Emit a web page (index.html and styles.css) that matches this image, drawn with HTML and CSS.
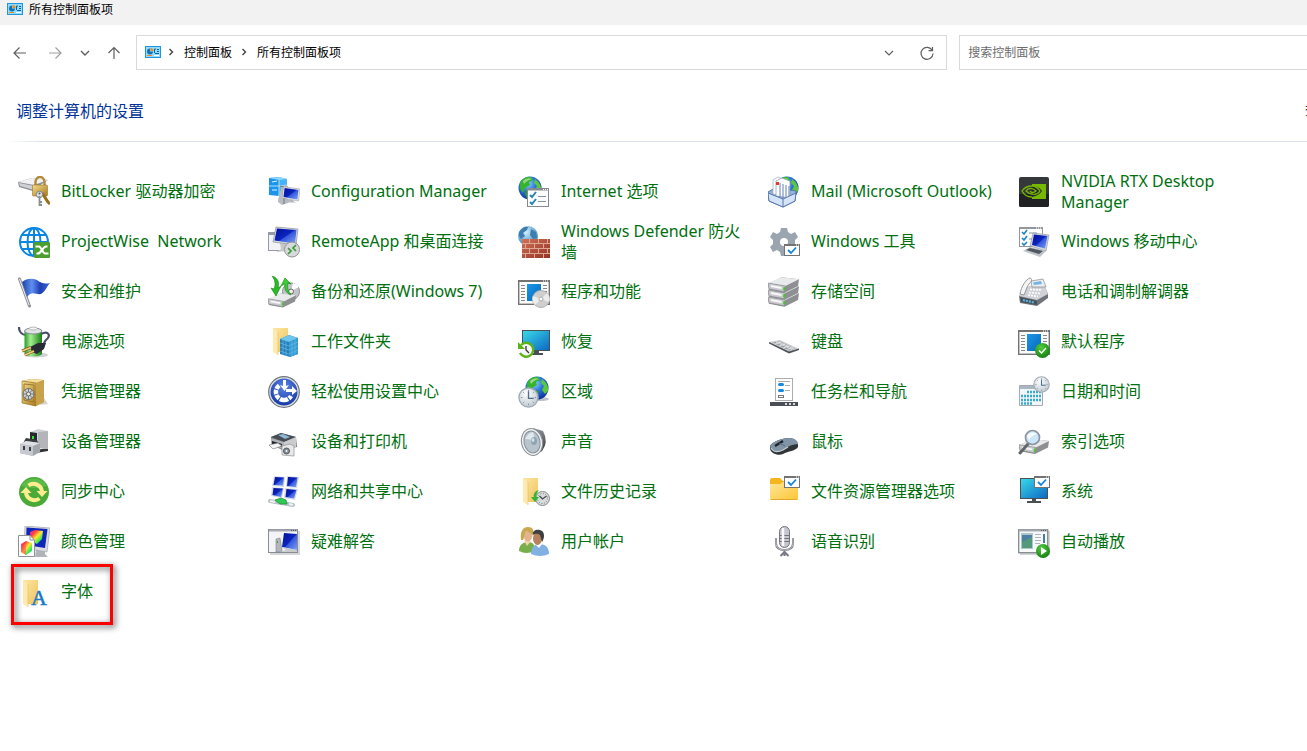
FILE: index.html
```html
<!DOCTYPE html>
<html lang="zh-CN">
<head>
  <meta charset="UTF-8">
  <title>所有控制面板项</title>
  <meta name="viewport" content="width=device-width, initial-scale=1.0">
  <link rel="stylesheet" href="styles.css">
</head>
<body>
  <!-- shared gradients and icon parts -->
  <svg class="defs" width="0" height="0" aria-hidden="true">
    <defs>
      <linearGradient id="gold" x1="0" y1="0" x2="1" y2="1"><stop offset="0" stop-color="#f3dc8c"/><stop offset="1" stop-color="#a97a1c"/></linearGradient>
      <linearGradient id="dark" x1="0" y1="0" x2="0" y2="1"><stop offset="0" stop-color="#8b9299"/><stop offset="1" stop-color="#26292c"/></linearGradient>
      <linearGradient id="blue" x1="0" y1="0" x2="1" y2="1"><stop offset="0" stop-color="#00109c"/><stop offset=".5" stop-color="#0d25bd"/><stop offset=".54" stop-color="#3557dc"/><stop offset="1" stop-color="#7ea2f6"/></linearGradient>
      <linearGradient id="cyan" x1="0" y1="0" x2="1" y2="1"><stop offset="0" stop-color="#3adbe8"/><stop offset="1" stop-color="#0b66c3"/></linearGradient>
      <linearGradient id="sky" x1="0" y1="0" x2="1" y2="1"><stop offset="0" stop-color="#1b97ea"/><stop offset="1" stop-color="#0867b8"/></linearGradient>
      <linearGradient id="yellow" x1="0" y1="0" x2="1" y2="1"><stop offset="0" stop-color="#ffe7a2"/><stop offset="1" stop-color="#ecc45c"/></linearGradient>
      <linearGradient id="amber" x1="0" y1="0" x2="1" y2="1"><stop offset="0" stop-color="#ffe59a"/><stop offset="1" stop-color="#fdc734"/></linearGradient>
      <linearGradient id="flag" x1="0" y1="0" x2="1" y2="0"><stop offset="0" stop-color="#1c3fa8"/><stop offset=".35" stop-color="#5f8ff0"/><stop offset=".65" stop-color="#1f3fb5"/><stop offset="1" stop-color="#3e66d8"/></linearGradient>
      <linearGradient id="battery" x1="0" y1="0" x2="1" y2="0"><stop offset="0" stop-color="#2a9a2a"/><stop offset=".35" stop-color="#a5ee90"/><stop offset="1" stop-color="#168016"/></linearGradient>
      <linearGradient id="rainbow" x1="0" y1="0" x2="1" y2="1"><stop offset="0" stop-color="#f22ad8"/><stop offset=".25" stop-color="#ff3b3b"/><stop offset=".5" stop-color="#ffe92e"/><stop offset=".75" stop-color="#2ee85a"/><stop offset="1" stop-color="#1ec8ff"/></linearGradient>
      <linearGradient id="brick" x1="0" y1="0" x2="1" y2="1"><stop offset="0" stop-color="#d27058"/><stop offset="1" stop-color="#933322"/></linearGradient>
      <radialGradient id="ocean" cx=".4" cy=".3" r=".75"><stop offset="0" stop-color="#8fd6ff"/><stop offset=".45" stop-color="#2d78dc"/><stop offset="1" stop-color="#0a2a96"/></radialGradient>
      <radialGradient id="pale" cx=".4" cy=".3" r=".75"><stop offset="0" stop-color="#d3efff"/><stop offset="1" stop-color="#3180b8"/></radialGradient>
      <radialGradient id="green" cx=".4" cy=".3" r=".75"><stop offset="0" stop-color="#52cc3c"/><stop offset="1" stop-color="#137d12"/></radialGradient>
      <radialGradient id="ease" cx=".5" cy=".3" r=".7"><stop offset="0" stop-color="#5c85e6"/><stop offset="1" stop-color="#173aa6"/></radialGradient>
      <radialGradient id="face" cx=".4" cy=".3" r=".8"><stop offset="0" stop-color="#ffffff"/><stop offset="1" stop-color="#b7c3cd"/></radialGradient>
    </defs>

    <symbol id="globe" viewBox="0 0 24 24">
      <circle cx="12" cy="12" r="11.5" fill="url(#ocean)"/>
      <path d="M3 5Q8 0 13 1L15 4L11 6L12 9L7 12L5 17Q0 12 3 5Z" fill="#38b32c"/>
      <path d="M8 14L14 15L12 21L9 23L7 18Z" fill="#2a9c35"/>
      <path d="M17 3Q24 8 23 15L20 18L17 14L19 10L16 7Z" fill="#5bc83b"/>
      <path d="M5 5Q9 1 14 3Q9 4 6 8Z" fill="#d4f4c0" opacity=".6"/>
    </symbol>

    <symbol id="folder" viewBox="0 0 18 28">
      <path d="M1 1H16V25L6 25Z" fill="url(#yellow)"/>
      <path d="M1 1L6 5V28L1 25Z" fill="#ffe9ae"/>
      <path d="M6 5V28" stroke="#e2be60" stroke-width=".6"/>
    </symbol>

    <symbol id="screen" viewBox="0 0 24 22">
      <path d="M8 17L15 18L16 20L20 21H7L4 19L8 18Z" fill="#b5b8bc"/>
      <path d="M2 0L24 3L22 19L0 15Z" fill="#e5e7ea" stroke="#8e9298" stroke-width=".7"/>
      <path d="M3.500 1.700L22 4.300L20.500 17L2 13.600Z" fill="url(#blue)"/>
    </symbol>

    <symbol id="drive" viewBox="0 0 32 16">
      <path d="M0 7L14 0L32 2L31 9L17 16L1 13Z" fill="#8d8f92"/>
      <path d="M0 6L14 0L32 2L18 9Z" fill="#e9eaec"/>
      <path d="M0 6L18 9L17 15L1 12Z" fill="#c9cacf" stroke="#77797d" stroke-width=".5"/>
      <path d="M3 8L14 10V12L3 10Z" fill="#f8f8fa"/>
      <path d="M16 10L18 10L17.500 14L15.500 13.500Z" fill="#4cc42f"/>
    </symbol>

    <symbol id="checkwin" viewBox="0 0 16 12">
      <rect x=".5" y=".5" width="15" height="11" fill="#fff" stroke="#737373"/>
      <path d="M0 1H16" stroke="#737373" stroke-width="2"/>
      <path d="M12 1H13M14 1H15" stroke="#fff"/>
      <path d="M4 6L7 9L12 3.500" fill="none" stroke="#1384de" stroke-width="1.800"/>
    </symbol>

    <symbol id="appwin" viewBox="0 0 32 26">
      <rect x=".7" y=".7" width="30.600" height="23.600" fill="#fafafa" stroke="#737373" stroke-width="1.400"/>
      <path d="M0 1H32" stroke="#737373" stroke-width="2"/>
      <path d="M25 1H26M27 1H28M29 1H30" stroke="#fff"/>
      <path d="M3 5.500H7M3 8.500H7M3 11.500H7M3 14.500H7M3 17.500H7M3 20.500H7M25 5.500H29M25 8.500H29M25 11.500H29M25 14.500H29" stroke="#858585"/>
      <rect x="9" y="4" width="14" height="17" fill="url(#sky)"/>
    </symbol>

    <symbol id="clock" viewBox="0 0 22 22">
      <circle cx="11" cy="11" r="10" fill="url(#face)" stroke="#a3adb5" stroke-width="1.500"/>
      <path d="M11 3V4.500M11 17.500V19M3 11H4.500M17.500 11H19M5.500 5.500L6.500 6.500M15.500 15.500L16.500 16.500M5.500 16.500L6.500 15.500M15.500 6.500L16.500 5.500" stroke="#7f8d99"/>
      <path d="M11 4.500V12H16.500" fill="none" stroke="#4d6f88" stroke-width="1.400"/>
    </symbol>

    <symbol id="panel" viewBox="0 0 16 12">
      <rect width="16" height="12" fill="#2196dc"/>
      <rect x="1" y="1" width="14" height="10" fill="#8edcff"/>
      <path d="M5 2.500A3 3 0 1 0 8 5.500H5Z" fill="#1672b8"/>
      <path d="M5.500 2A3 3 0 0 1 8.500 5H5.500Z" fill="#f08a1c"/>
      <path d="M9.500 7V3H11M12 3.500H14M12 5.500H14M10 7.500H14" fill="none" stroke="#14609f"/>
      <path d="M2 9.500H7" stroke="#f08a1c"/><path d="M9 9.500H14" stroke="#fff"/>
    </symbol>
  </svg>

  <header class="titlebar">
    <svg class="panel-icon" aria-hidden="true"><use href="#panel"/></svg>
    <span>所有控制面板项</span>
  </header>

  <nav class="toolbar">
    <div class="history">
      <button type="button" aria-label="后退"><svg viewBox="0 0 16 16"><path d="M14 8H2.500M7.500 2.500L2 8L7.500 13.500"/></svg></button>
      <button type="button" aria-label="前进" disabled><svg viewBox="0 0 16 16"><path d="M2 8H13.500M8.500 2.500L14 8L8.500 13.500"/></svg></button>
      <button type="button" class="recent" aria-label="最近浏览的位置"><svg viewBox="0 0 16 16"><path d="M4 6L8 10L12 6"/></svg></button>
      <button type="button" aria-label="向上"><svg viewBox="0 0 16 16"><path d="M8 14V2.500M2.500 8L8 2.500L13.500 8"/></svg></button>
    </div>
    <div class="address">
      <svg class="panel-icon" aria-hidden="true"><use href="#panel"/></svg>
      <svg class="sep" viewBox="0 0 8 8"><path d="M2.500 1L5.500 4L2.500 7"/></svg>
      <a href="#">控制面板</a>
      <svg class="sep" viewBox="0 0 8 8"><path d="M2.500 1L5.500 4L2.500 7"/></svg>
      <a href="#">所有控制面板项</a>
      <div class="address-tools">
        <button type="button" aria-label="历史记录"><svg viewBox="0 0 16 16"><path d="M4 6L8 10L12 6"/></svg></button>
        <button type="button" aria-label="刷新"><svg viewBox="0 0 16 16"><path d="M13.300 5.500A6 6 0 1 0 14 8.500M13.500 2V5.700H9.500"/></svg></button>
      </div>
    </div>
    <input class="search" type="search" aria-label="搜索控制面板" placeholder="搜索控制面板">
  </nav>

  <main>
    <div class="heading">
      <h1>调整计算机的设置</h1>
      <span class="view-by">查看方式:</span>
    </div>

    <ul class="items">
      <li><a href="#">
        <svg viewBox="0 0 32 32"><path d="M0 6L14 2L30 4L18 12V16L1 11Z" fill="#8e9095"/><path d="M0 6L14 2L30 4L16 9Z" fill="#f1f1f3"/><path d="M1 7L16 10V14L2 10Z" fill="#cfd0d6"/><path d="M17.500 10V6A4.500 5 0 0 1 26.500 6V10" fill="none" stroke="#b08a3a" stroke-width="2.400"/><rect x="14.500" y="9" width="15" height="11" rx="1" fill="url(#gold)" stroke="#9a7427" stroke-width=".6"/><path d="M24 17L30 26L32 28" stroke="#9a6d18" stroke-width="3"/><circle cx="21.500" cy="18.500" r="3.200" fill="#dfe1e4" stroke="#7f8388"/><path d="M21.500 20V30M21.500 26H24M21.500 29H24" stroke="#8a8d92" stroke-width="1.800"/><circle cx="21.500" cy="17.500" r="1" fill="#555"/></svg>
        <span>BitLocker 驱动器加密</span></a></li>
      <li><a href="#">
        <svg viewBox="0 0 32 32"><path d="M1 2L11 1V20L1 19Z" fill="#1c94ea"/><path d="M11 1L19 3V19L11 20Z" fill="#45b3f5"/><path d="M1 2L11 1L19 3L11 4Z" fill="#8fd7ff"/><path d="M1 10H11L19 9M11 4V20" stroke="#a8e2ff" fill="none"/><path d="M4 6L9 5M4 14H9" stroke="#e0f5ff"/><path d="M14 9L20 10V27L14 29L10 26V24Z" fill="#b9bdc3"/><path d="M12 10L16 11V28" fill="none" stroke="#72767b"/><use href="#screen" x="14" y="9" width="18" height="20"/></svg>
        <span>Configuration Manager</span></a></li>
      <li><a href="#">
        <svg viewBox="0 0 32 32"><use href="#globe" x="0" y="0" width="24" height="24"/><rect x="9.500" y="12.500" width="21" height="18" fill="#fff" stroke="#85898f"/><path d="M9 13.500H31" stroke="#85898f" stroke-width="2"/><path d="M25 13.500H26M27 13.500H28M29 13.500H30" stroke="#fff"/><path d="M12 19L14 21L18 16M12 26L14 28L18 23" fill="none" stroke="#2386b5" stroke-width="2"/><path d="M20 20.500H28M20 25.500H28" stroke="#8094ad"/></svg>
        <span>Internet 选项</span></a></li>
      <li><a href="#">
        <svg viewBox="0 0 32 32"><use href="#globe" x="7" y="0" width="24" height="24"/><path d="M0 16L7 12L28 15L27 25L15 31L1 25Z" fill="#95b4de" stroke="#5877ab"/><path d="M5 4L10 1L15 3V20L5 18Z" fill="#fff" stroke="#9aaabd" stroke-width=".7"/><path d="M8 5L14 2L22 5V22L8 20Z" fill="#fff" stroke="#8092aa" stroke-width=".7"/><path d="M12 7V21M15 8V22M18 9V23M21 10V23" stroke="#6381b6"/><path d="M8 6H11V9H8Z" fill="#e2382a"/><path d="M0 17L15 23L28 17L27 25L15 31L1 25Z" fill="#d5e4f8" stroke="#5877ab"/><path d="M15 23V31" stroke="#5877ab"/></svg>
        <span>Mail (Microsoft Outlook)</span></a></li>
      <li><a href="#">
        <svg viewBox="0 0 32 32"><rect x="1" y="1" width="30" height="30" rx="2" fill="#34383b"/><path d="M1 18H31V29A2 2 0 0 1 29 31H3A2 2 0 0 1 1 29Z" fill="#1f2123"/><path d="M14 8H28V23H14Z" fill="#76b900"/><path d="M14 10C19 10 22 12 24 15C22 18 19 20 14 21Z" fill="#26292c"/><path d="M14 10C9 10 6 12 4 15C6 19 10 21 14 21M14 10C18 10 20 12 22 15C20 18 17 19 14 18C11 18 9 16 8 15C10 12 14 11 18 15C16 17 13 17 12 15" fill="none" stroke="#76b900" stroke-width="1.300"/></svg>
        <span>NVIDIA RTX Desktop Manager</span></a></li>

      <li><a href="#">
        <svg viewBox="0 0 32 32"><g fill="none" stroke="#0b86e2" stroke-width="2"><circle cx="16" cy="16" r="14"/><ellipse cx="16" cy="16" rx="6.500" ry="14"/><path d="M16 2V30M4 9H28M2 16H30M4 23H28"/></g><rect x="16" y="16" width="16" height="16" rx="1" fill="#4d9e31"/><path d="M17.500 20.500H21C23 20.500 25 27.500 27 27.500H30.500M18.500 27.500H20C23 27.500 25 20.500 28 20.500H29.500" fill="none" stroke="#fff" stroke-width="2.200"/></svg>
        <span>ProjectWise&nbsp; Network</span></a></li>
      <li><a href="#">
        <svg viewBox="0 0 32 32"><rect x=".5" y="6.500" width="15" height="18" fill="#f2f3f6" stroke="#9699a6"/><path d="M0 8H14" stroke="#9699a6" stroke-width="2"/><path d="M12 17L22 19L20 25L8 26L13 23Z" fill="#c6c8ca"/><path d="M8 1L30 3L28 19L5 16Z" fill="#d5d8dc" stroke="#8d9196" stroke-width=".7"/><path d="M9 2.500L28.500 4L27 17.500L6.500 14.500Z" fill="url(#blue)"/><circle cx="24" cy="23.500" r="7.500" fill="#d7d9db" stroke="#909396"/><path d="M20 22L23 25L20 28M28 19L25 22L28 25" fill="none" stroke="#3a9a38" stroke-width="1.700"/></svg>
        <span>RemoteApp 和桌面连接</span></a></li>
      <li><a href="#">
        <svg viewBox="0 0 32 32"><circle cx="10" cy="10" r="10" fill="url(#pale)"/><path d="M1 6Q5 0 10 1L9 4L5 7L7 10L3 13Q0 10 1 6ZM13 3L18 6L19 12L15 13L12 9Z" fill="#3b7fae"/><rect x="4" y="13" width="28" height="19" fill="#dca795"/><path d="M4 13H11V17H4ZM12 13H20V17H12ZM21 13H29V17H21ZM30 13H32V17H30ZM4 18H7V22H4ZM8 18H16V22H8ZM17 18H25V22H17ZM26 18H32V22H26ZM4 23H11V27H4ZM12 23H20V27H12ZM21 23H29V27H21ZM30 23H32V27H30ZM4 28H7V32H4ZM8 28H16V32H8ZM17 28H25V32H17ZM26 28H32V32H26Z" fill="url(#brick)"/></svg>
        <span>Windows Defender 防火墙</span></a></li>
      <li><a href="#">
        <svg viewBox="0 0 32 32"><path d="M13 2H19L20 6L23 8L27 6L30 11L27 14V18L30 21L27 26L23 25L20 27L19 30H13L12 26L9 24L5 26L2 21L5 18V14L2 11L5 6L9 8L12 6ZM16 12A4 4 0 1 0 16 20A4 4 0 0 0 16 12Z" fill="#9aa5af" fill-rule="evenodd"/><use href="#checkwin" x="16" y="18" width="16" height="12"/></svg>
        <span>Windows 工具</span></a></li>
      <li><a href="#">
        <svg viewBox="0 0 32 32"><rect x="1.500" y="1.500" width="23" height="19" fill="#fff" stroke="#92979f"/><path d="M1 2H25" stroke="#92979f" stroke-width="2"/><path d="M18 2H19M20 2H21M22 2H23" stroke="#fff"/><path d="M4 6L6 8L9 4M4 12L6 14L9 10M4 17L6 19L9 16" fill="none" stroke="#1d86c4" stroke-width="1.600"/><path d="M11 7H19M11 13H15" stroke="#8094ad"/><path d="M15 7L31 9L28 25L12 20Z" fill="#d2d7df" stroke="#858b95" stroke-width=".6"/><path d="M16 8.500L29.500 10L27 22.500L14 19Z" fill="url(#blue)"/><path d="M12 21L28 25L22 31L5 25Z" fill="#bfc4ca"/><path d="M12 22L25 25L21 28L8 24Z" fill="#50565e"/></svg>
        <span>Windows 移动中心</span></a></li>

      <li><a href="#">
        <svg viewBox="0 0 32 32"><path d="M1.500 3L11.500 30" stroke="#8f9297" stroke-width="3" stroke-linecap="round"/><path d="M1.500 3L11 29" stroke="#eceef0"/><path d="M4 6C9 2 14 2 19 4C24 8 28 8 32 7C29 10 28 15 23 18C18 19 14 14 9 21Z" fill="url(#flag)"/></svg>
        <span>安全和维护</span></a></li>
      <li><a href="#">
        <svg viewBox="0 0 32 32"><circle cx="23" cy="15.500" r="8.500" fill="#c4c5c9" stroke="#8a8c90"/><path d="M23 15L31 11A9 9 0 0 0 25 7Z" fill="#fff"/><circle cx="23" cy="15.500" r="2.500" fill="#eee" stroke="#666"/><use href="#drive" x="0" y="17" width="28" height="15"/><path d="M4 0C9 1 12 6 10 12L13 10L8 20L3 12L6 13C8 8 7 4 4 0Z" fill="#28ba27" stroke="#128312" stroke-width=".6"/><path d="M23 19C18 17 16 13 17 8L13 10L17 2L23 8L20 7C19 12 20 15 23 19Z" fill="#3ccc36" stroke="#128312" stroke-width=".6"/></svg>
        <span>备份和还原(Windows 7)</span></a></li>
      <li><a href="#">
        <svg viewBox="0 0 32 32"><use href="#appwin" x="0" y="4" width="32" height="26"/><circle cx="23" cy="23" r="8.500" fill="#cfcfcf" stroke="#b0b0b0"/><path d="M23 23L17 29A9 9 0 0 1 15 20ZM23 23L29 17A9 9 0 0 1 31 26Z" fill="#ececec"/><circle cx="23" cy="23" r="2" fill="#fff" stroke="#aaa"/></svg>
        <span>程序和功能</span></a></li>
      <li><a href="#">
        <svg viewBox="0 0 32 32"><use href="#drive" x="0" y="15" width="31" height="16"/><use href="#drive" x="0" y="8" width="31" height="16"/><use href="#drive" x="0" y="1" width="31" height="16"/></svg>
        <span>存储空间</span></a></li>
      <li><a href="#">
        <svg viewBox="0 0 32 32"><path d="M1 20L6 12L25 7L30 18V22L19 30L2 27Z" fill="#6f747a"/><path d="M5 12L25 7L30 18L19 24L1 20Z" fill="#cfd2d6"/><path d="M13 5L25 3L28 11L14 11Z" fill="#eceef0" stroke="#777" stroke-width=".6"/><path d="M15 6.500L23 5L24 8L16 9Z" fill="#72b4e8"/><path d="M2 18C3 11 8 3 12 2C15 3 13 6 11 8C8 12 8 15 6 19Z" fill="#f4f5f6" stroke="#7d8186" stroke-width=".8"/><path d="M12 13.500L23 14M11 16.500L22 17.500M10 19L20 20.500" stroke="#fff" stroke-width="1.600" stroke-dasharray="2 1"/><path d="M2 21L19 25V29L3 26Z" fill="#4a5057"/><path d="M5 24L16 26.500" stroke="#54bce8" stroke-width="2" stroke-dasharray="2 1"/></svg>
        <span>电话和调制解调器</span></a></li>

      <li><a href="#">
        <svg viewBox="0 0 32 32"><ellipse cx="18" cy="29" rx="12" ry="2.500" fill="#cfd1d3"/><path d="M1 1C1 6 4 9 8 9M23 8C31 4 33 10 28 14C26 16 26 18 25 20" fill="none" stroke="#4a4e68" stroke-width="2.200"/><path d="M6.500 5V28A9 3 0 0 0 24 28V5Z" fill="url(#battery)"/><ellipse cx="15.200" cy="5" rx="8.700" ry="3" fill="#dfe3e6" stroke="#848a90"/><ellipse cx="15.200" cy="2.500" rx="4" ry="1.500" fill="#f4f4f4" stroke="#999" stroke-width=".6"/><path d="M12 21L20 17L28 17L26 23L19 28L14 26Z" fill="#282b33"/><path d="M4 25L13 21.500M7 29L16 25" stroke="#7c5a18" stroke-width="3"/><path d="M4 25L13 21.500M7 29L16 25" stroke="#e8cf7e" stroke-width="1.600"/></svg>
        <span>电源选项</span></a></li>
      <li><a href="#">
        <svg viewBox="0 0 32 32"><use href="#folder" x="4" y="1" width="18" height="28"/><path d="M12 13L21 9L30 12V28L22 31L12 28Z" fill="#2480bd"/><path d="M12 13L21 9L30 12L21 16Z" fill="#6fc5ed"/><path d="M21 16L30 12V28L21 31Z" fill="#349bd3"/><path d="M12 17L21 20L30 16M12 21L21 24L30 20M12 25L21 28L30 24M15 14V29M18 15V30M24 15V30M27 13V29" fill="none" stroke="#74bfe6" stroke-width=".6"/></svg>
        <span>工作文件夹</span></a></li>
      <li><a href="#">
        <svg viewBox="0 0 32 32"><path d="M16 25H21V27H25V29H13V27H16Z" fill="#4a4f54"/><rect x="4.500" y="4.500" width="27" height="20" fill="url(#cyan)" stroke="#4b5055"/><circle cx="8" cy="24" r="6.500" fill="#f7f7f7"/><path d="M3 19A7 7 0 1 1 2 27" fill="none" stroke="#5cb318" stroke-width="2.400"/><path d="M0 16V23H7Z" fill="#5cb318"/><path d="M8 20V24L11 27" fill="none" stroke="#333" stroke-width="1.300"/></svg>
        <span>恢复</span></a></li>
      <li><a href="#">
        <svg viewBox="0 0 32 32"><path d="M1 16L12 14L31 23L21 27Z" fill="#c9cbce"/><path d="M1 16L21 25.500L31 22.500V24L21 27.500L1 17.500Z" fill="#4f5358"/><path d="M5 16.500L12 15.500L27 22.500L21 24.500Z" fill="#9a9da2"/><path d="M8 16L24 23.500M11 16L26 23M7 18L13 16M11 20L17 18M15 22L21 20M19 23.500L25 21.500" stroke="#e9eaec" stroke-width=".8"/></svg>
        <span>键盘</span></a></li>
      <li><a href="#">
        <svg viewBox="0 0 32 32"><use href="#appwin" x="0" y="4" width="32" height="26"/><circle cx="24.500" cy="24.500" r="7.500" fill="url(#green)"/><path d="M21 24.500L23.500 27L28 22" fill="none" stroke="#fff" stroke-width="1.300"/></svg>
        <span>默认程序</span></a></li>

      <li><a href="#">
        <svg viewBox="0 0 32 32"><path d="M22 29L30 28L26 22Z" fill="#d5d3cc"/><path d="M4 5L13 3L26 4V26L18 30L4 27Z" fill="#b88f35"/><path d="M4 5L13 3L26 4L18 7Z" fill="#f2df9c"/><path d="M4 5L18 7V30L4 27Z" fill="url(#gold)" stroke="#94712a" stroke-width=".6"/><path d="M18 7L26 4V26L18 30Z" fill="#c7a24b"/><path d="M6 8L16 9V26L6 24Z" fill="none" stroke="#9b7830"/><circle cx="10.500" cy="18" r="5.500" fill="#d1d3d2" stroke="#6c6e6c"/><path d="M10.500 12V24M5 18H16M6.500 14L14.500 22M14.500 14L6.500 22" stroke="#737772"/><circle cx="10.500" cy="18" r="2" fill="#eee" stroke="#666"/></svg>
        <span>凭据管理器</span></a></li>
      <li><a href="#">
        <svg viewBox="0 0 32 32"><circle cx="16" cy="16" r="15.300" fill="#e1e4e8" stroke="#70747b" stroke-width="1.200"/><circle cx="16" cy="16" r="13.500" fill="url(#ease)"/><path d="M16 24A8 8 0 0 1 12 9M16 24A8 8 0 0 0 23 20" fill="none" stroke="#fff" stroke-width="4.500" stroke-dasharray="4.200 1"/><path d="M15 4H18V10L21 9L16.500 15L12 9L15 10Z" fill="#fff"/><path d="M18 13H24V10L29 15L24 19V16H18Z" fill="#fff"/></svg>
        <span>轻松使用设置中心</span></a></li>
      <li><a href="#">
        <svg viewBox="0 0 32 32"><ellipse cx="22" cy="23" rx="9" ry="2" fill="#bcc2c9"/><use href="#globe" x="7" y="0" width="24" height="24"/><use href="#clock" x="0" y="11" width="21" height="21"/></svg>
        <span>区域</span></a></li>
      <li><a href="#">
        <svg viewBox="0 0 32 32"><rect x="7.500" y="2.500" width="17" height="22" fill="#fff" stroke="#aaadb0"/><path d="M10 5.500H22M17 9.500H22M17 14.500H22" stroke="#aaa"/><rect x="10" y="7" width="6" height="3" rx="1.500" fill="#168ade"/><rect x="10" y="13" width="6" height="3" rx="1.500" fill="#168ade"/><rect x="10.500" y="19.500" width="5" height="2" fill="#fff" stroke="#777"/><path d="M2 26H30V30H2Z" fill="#4a4e55"/><path d="M17 28H19M21 28H23M25 28H27" stroke="#d7d9db" stroke-width="2"/></svg>
        <span>任务栏和导航</span></a></li>
      <li><a href="#">
        <svg viewBox="0 0 32 32"><path d="M1.500 9.500H24.500V29.500H1.500Z" fill="#f1f7fa" stroke="#a1aab0"/><path d="M2 10H24V13H2Z" fill="#a9b7c1"/><path d="M9 16H23M3 20H23M3 24H23M3 27.500H14" stroke="#3aabcf" stroke-width="2.500" stroke-dasharray="2 1"/><use href="#clock" x="15" y="0" width="17" height="17"/></svg>
        <span>日期和时间</span></a></li>

      <li><a href="#">
        <svg viewBox="0 0 32 32"><path d="M18 24L30 22V25L18 27Z" fill="#333"/><path d="M12 6L20 3L30 5V23L20 22L12 18Z" fill="#d3d4d7"/><path d="M20 6L30 5V23L20 22Z" fill="#b3b5ba"/><path d="M12 6L19 7V19L12 16Z" fill="#25292b"/><path d="M14 10H16V13H14Z" fill="#2ee33a"/><path d="M8 12L19 14L22 20L5 17Z" fill="#3a3e43"/><path d="M2 18L8 15L22 17V26L15 30L2 27Z" fill="#a1a5ac"/><path d="M2 18L8 15L22 17L15 20Z" fill="#dfe0e3"/><path d="M2 18L15 20V30L2 27Z" fill="#c6c9d0"/><path d="M6 20V24M12 21V25" stroke="#3b3e42" stroke-width="2"/></svg>
        <span>设备管理器</span></a></li>
      <li><a href="#">
        <svg viewBox="0 0 32 32"><path d="M3 11L13 7L28 11L29 21L14 24L3 18Z" fill="#777b80"/><path d="M3 11L13 7L28 11L16 16Z" fill="#484d53"/><path d="M10 9L15 8L22 11L17 13Z" fill="#8fb7d5"/><path d="M3 12L16 16V24L3 18Z" fill="#aeb2b7"/><path d="M16 16L28 11V21L16 24Z" fill="#caccce"/><path d="M4 15L14 18V21L4 18Z" fill="#22262a"/><path d="M1 19L10 17L14 20L5 23Z" fill="#f5f5f5" stroke="#777" stroke-width=".6"/><path d="M14 20L22 18L26 20V30L14 29Z" fill="#e7e8e9" stroke="#8d9093" stroke-width=".7"/><circle cx="18.500" cy="25" r="3" fill="#87919b" stroke="#555"/><circle cx="18.500" cy="25" r="1" fill="#e7f3ff"/></svg>
        <span>设备和打印机</span></a></li>
      <li><a href="#">
        <svg viewBox="0 0 32 32"><path d="M15 2L25 5Q31 16 24 25L16 29Z" fill="url(#dark)"/><ellipse cx="14" cy="16" rx="10.500" ry="13.500" transform="rotate(-12 14 16)" fill="#f2f3f4" stroke="#8e9295"/><ellipse cx="14" cy="16" rx="8" ry="11" transform="rotate(-12 14 16)" fill="#b8c3cb" stroke="#87919a"/><path d="M7 13Q10 7 15 6L17 14Z" fill="#e1e9ef"/><ellipse cx="16" cy="15" rx="3" ry="4" fill="#8fa4b0"/><ellipse cx="15" cy="14" rx="1.500" ry="2" fill="#cbe1eb"/></svg>
        <span>声音</span></a></li>
      <li><a href="#">
        <svg viewBox="0 0 32 32"><path d="M2 20C4 16 14 12 21 12C27 12 31 17 30 21C28 25 20 25 15 28C11 30 2 28 2 22Z" fill="#303437"/><path d="M2 20C4 16 14 12 21 12C27 12 30 15 30 18C25 18 20 20 15 24C10 27 3 25 2 20Z" fill="#8194a6"/><path d="M3 22C6 27 11 26 15 24L20 21" fill="none" stroke="#c7ced4" stroke-width="1.200"/><path d="M7 20L15 15" stroke="#1e2529" stroke-width="2.500"/><path d="M11 17L17 20" stroke="#57697a"/></svg>
        <span>鼠标</span></a></li>
      <li><a href="#">
        <svg viewBox="0 0 32 32"><use href="#drive" x="1" y="12" width="30" height="17"/><path d="M10 18L2 27" stroke="#63676c" stroke-width="3" stroke-linecap="round"/><circle cx="14.500" cy="11.500" r="7" fill="#cbe6fb" stroke="#8d969e" stroke-width="1.700"/><path d="M9 10Q13 4 19 8Q14 9 11 14Z" fill="#f8fcff"/></svg>
        <span>索引选项</span></a></li>

      <li><a href="#">
        <svg viewBox="0 0 32 32"><circle cx="16" cy="16" r="15" fill="#49aa38"/><path d="M3 10A15 15 0 0 1 29 10Q16 14 3 10Z" fill="#6bc653" opacity=".6"/><path d="M10.500 9.500A8.500 8.500 0 0 1 24 15.500M21.500 22.500A8.500 8.500 0 0 1 8 16.500" fill="none" stroke="#ffec91" stroke-width="4"/><path d="M18.500 15H29.500L24 21ZM2.500 17H13.500L8 11Z" fill="#ffec91"/></svg>
        <span>同步中心</span></a></li>
      <li><a href="#">
        <svg viewBox="0 0 32 32"><path d="M6 0L17 1L16 11L4 10ZM19 0L31 1L29 12L18 11ZM4 11L16 12L14 22L3 20ZM17 12L30 13L27 24L16 22Z" fill="#d6dae3"/><path d="M7 1L16 1.500L15 9.500L5.500 9Z" fill="url(#blue)"/><path d="M20 1L29.500 1.500L28 11L19 10Z" fill="url(#blue)"/><path d="M5.500 12L15 12.500L13 21L4.500 19Z" fill="url(#blue)"/><path d="M18.500 13L28.500 14L26 22.500L17.500 21Z" fill="url(#blue)"/><path d="M2 25L25 29" stroke="#b8bfc4" stroke-width="4" stroke-linecap="round"/><path d="M2 25L7 26M21 28L25 29" stroke="#eef0f1" stroke-width="2"/><path d="M7 24L13 22L18 24L19 28L12 28Z" fill="#2fca52" stroke="#138d32" stroke-width=".7"/></svg>
        <span>网络和共享中心</span></a></li>
      <li><a href="#">
        <svg viewBox="0 0 32 32"><use href="#folder" x="4" y="1" width="18" height="28"/><circle cx="24.500" cy="22.500" r="7" fill="#d9dcdd" stroke="#858b8e"/><circle cx="24.500" cy="22.500" r="5" fill="none" stroke="#777" stroke-dasharray="1 1.600"/><path d="M21.500 20L24.500 23L28.500 20" fill="none" stroke="#454b4f" stroke-width="1.300"/><path d="M21 14C17 15 15 18 16 21L13 21L17 26L21 21L18.500 21C18 18 19 16 21 14Z" fill="#34b53a"/></svg>
        <span>文件历史记录</span></a></li>
      <li><a href="#">
        <svg viewBox="0 0 32 32"><path d="M2 4A2 2 0 0 1 4 2H12L15 5H30V14H2Z" fill="#f5b51c"/><path d="M2 8H12L15 6H30V23A1 1 0 0 1 29 24H3A1 1 0 0 1 2 23Z" fill="url(#amber)"/><path d="M3 23.500H29" stroke="#e3a52b"/><use href="#checkwin" x="16" y="0" width="16" height="12"/></svg>
        <span>文件资源管理器选项</span></a></li>
      <li><a href="#">
        <svg viewBox="0 0 32 32"><path d="M14 23H18V25H23V27H9V25H14Z" fill="#4a4f54"/><rect x="2.500" y="2.500" width="27" height="20" fill="url(#cyan)" stroke="#4b5055"/><use href="#checkwin" x="16" y="0" width="16" height="12"/></svg>
        <span>系统</span></a></li>

      <li><a href="#">
        <svg viewBox="0 0 32 32"><path d="M18 23L27 24V28L30 31H17Z" fill="#b1b5b9"/><path d="M7 0L32 2L29 26L6 22Z" fill="#d9dce1" stroke="#a1a5a9" stroke-width=".7"/><path d="M8.500 1.500L29.500 3L27 22L8 19Z" fill="#1026b8"/><path d="M12 6L17 4L25 5L24 13L19 18L13 15Z" fill="url(#rainbow)"/><path d="M.5 9.500H12L16.500 14V30.500H.5Z" fill="#fff" stroke="#8e9296"/><path d="M12 10V14H16" fill="none" stroke="#8e9296"/><path d="M3 18L8 15L14 17V25L8 29L3 26Z" fill="url(#rainbow)"/><path d="M3 18L8 20V29L3 26Z" fill="#ff4f59" opacity=".6"/></svg>
        <span>颜色管理</span></a></li>
      <li><a href="#">
        <svg viewBox="0 0 32 32"><path d="M2 28H31V5" fill="none" stroke="#d4d6d8" stroke-width="2"/><rect x=".5" y="3.500" width="29" height="23" fill="#f2f4f7" stroke="#888d94"/><path d="M1 4.500H29" stroke="#a6abb2" stroke-width="2"/><path d="M23 4.500H24M25 4.500H26M27 4.500H28" stroke="#50545a"/><path d="M8 13L12 12L14 24V26H8Z" fill="#b3b7bc" stroke="#7d8186" stroke-width=".6"/><path d="M9 16H10" stroke="#2faf30" stroke-width="2"/><path d="M16 7L29 8V24L14 21Z" fill="url(#blue)"/><path d="M14 21L29 24V26H12L18 24Z" fill="#c7cbce"/></svg>
        <span>疑难解答</span></a></li>
      <li><a href="#">
        <svg viewBox="0 0 32 32"><path d="M1 25C1 18 6 16 10 16C16 16 17 20 17 25Q8 29 1 25Z" fill="#79af4b"/><path d="M6 14L9 20L13 15Z" fill="#f5d1b2"/><ellipse cx="10" cy="9" rx="4.500" ry="6.500" fill="#e4b491"/><path d="M3 14C2 5 5 1 10 1C16 1 16 6 15 9C12 7 10 5 8 5C6 7 7 11 5 14Z" fill="#c9a94f"/><path d="M13 28C13 21 17 18 21 18C28 18 31 22 31 28Q22 32 13 28Z" fill="#80b1e2"/><path d="M17 18L21 22L24 18Z" fill="#fff"/><ellipse cx="19.500" cy="12.500" rx="4.500" ry="6.500" fill="#b7805e"/><path d="M15 9C14 5 18 3 22 4C27 5 27 12 24 16L22 9C20 8 18 7 15 9Z" fill="#3d3f43"/></svg>
        <span>用户帐户</span></a></li>
      <li><a href="#">
        <svg viewBox="0 0 32 32"><path d="M8 12V17C8 22 12 24 16.500 24C21 24 25 22 25 17V12M16.500 24V30M12.500 30L16.500 26L20.500 30" fill="none" stroke="#777985" stroke-width="2"/><path d="M8 12V17C8 22 12 24 16.500 24C21 24 25 22 25 17V12" fill="none" stroke="#d1d1db" stroke-width=".8"/><rect x="11.500" y=".5" width="10" height="21" rx="5" fill="#c5c5ce" stroke="#767681"/><path d="M12 9.500H21M12 12.500H21M12 15.500H21" stroke="#71717c"/><path d="M15 2V20" stroke="#f9f9ff" stroke-width="2.500"/></svg>
        <span>语音识别</span></a></li>
      <li><a href="#">
        <svg viewBox="0 0 32 32"><path d="M2 28H31V5" fill="none" stroke="#d4d6d8" stroke-width="2"/><rect x=".7" y="3.700" width="29" height="23" fill="#f8f9fa" stroke="#858a91" stroke-width="1.300"/><path d="M1 4.500H29" stroke="#a6abb2" stroke-width="2"/><path d="M23 4.500H24M25 4.500H26M27 4.500H28" stroke="#50545a"/><path d="M3 7H15V23H3Z" fill="#b0c7ca"/><path d="M4 9H14V22H4Z" fill="#4f7fa6"/><path d="M4 16L14 11V22H4Z" fill="#54a568" opacity=".7"/><path d="M17 8.500H23M17 11.500H23M17 14.500H23M17 17.500H22" stroke="#b2b5b8"/><path d="M25 8H27V17H25Z" fill="#487f9d"/><circle cx="25" cy="25" r="7" fill="url(#green)"/><path d="M23 21V29L29 25Z" fill="#fff"/></svg>
        <span>自动播放</span></a></li>

      <li class="marked"><a href="#">
        <svg viewBox="0 0 32 32"><use href="#folder" x="4" y="3" width="18" height="28"/><text class="font-letter" x="13" y="29">A</text></svg>
        <span>字体</span></a></li>
    </ul>
  </main>
</body>
</html>
```

FILE: styles.css
```css
*, *::before, *::after { box-sizing: border-box; }
body { min-height: 100vh; margin: 0; background: #fff; color: #000; font-family: "Noto Sans", "Noto Sans CJK SC", sans-serif; font-size: 12px; }
a { color: inherit; text-decoration: none; }
button { display: flex; align-items: center; justify-content: center; padding: 0; border: none; background: none; }
button svg { width: 16px; height: 16px; fill: none; stroke: #5f5f5f; stroke-width: 1.2; }
button:disabled svg { stroke: #a0a0a0; }
.defs { position: absolute; }

.titlebar { display: flex; align-items: center; gap: 6px; height: 25px; padding: 0 7px 8px; background: #f2f2f2; }
.panel-icon { width: 16px; height: 12px; flex: none; }

.toolbar { display: grid; grid-template-columns: 124px minmax(0, 7fr) minmax(0, 3fr); column-gap: 12px; height: 55px; padding: 10px 0; }
.history { display: flex; align-items: center; padding-left: 12px; }
.history button { width: 16px; height: 32px; margin-right: 19px; flex: none; }
.history .recent { margin-right: 13px; margin-left: -5px; }
.history .recent svg { stroke-width: 1.4; }
.history button:last-child { margin-right: 0; }
.address { display: flex; align-items: center; padding: 0 11px 2px 8px; border: 1px solid #d9d9d9; }
.sep { width: 8px; height: 8px; margin: 0 9px 0 6px; fill: none; stroke: #444; stroke-width: 1.4; }
.address a + .sep { margin: 0 9px 0 8px; }
.address-tools { display: flex; gap: 22px; margin-left: auto; padding-top: 3px; }
.search { padding: 0 8px; border: 1px solid #d9d9d9; border-right: none; border-radius: 0; background: #fff; font: inherit; outline: none; appearance: none; }
.search::placeholder { color: #6d6d6d; }

.heading { display: flex; align-items: center; justify-content: space-between; height: 62px; padding: 0 0 2px 16px; border-bottom: 1px solid; border-image: linear-gradient(to right, #fff 8px, #dbe4ec 40px) 1; }
.heading h1 { margin: 0; color: #003399; font-size: 16px; font-weight: normal; }
.view-by { width: 2px; overflow: hidden; white-space: nowrap; }

.items { display: grid; grid-template-columns: repeat(auto-fill, 250px); grid-auto-rows: 50px; margin: 0; padding: 25px 0 16px 11px; list-style: none; }
.items li { position: relative; }
.items a { display: flex; align-items: center; gap: 11px; height: 50px; padding: 0 8px 0 7px; color: #00700f; font-size: 16px; line-height: 21px; }
.items svg { width: 32px; height: 32px; flex: none; }
.items span { padding-bottom: 1px; }
.font-letter { font-family: "Liberation Serif", serif; font-size: 22px; fill: #1979ca; stroke: #1979ca; stroke-width: 0.5; }

/* red frame round the fonts item */
.marked::after { content: ""; position: absolute; top: -3px; left: 0; width: 102px; height: 61px; border: 3px solid #f00; filter: drop-shadow(2px 2px 3px rgba(0, 0, 0, 0.7)); pointer-events: none; }
```
